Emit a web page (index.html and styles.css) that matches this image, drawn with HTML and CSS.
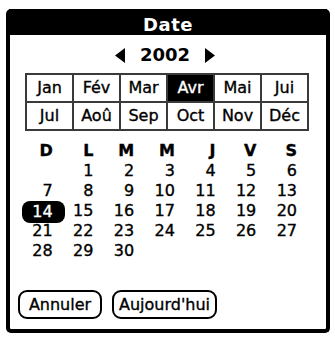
FILE: index.html
```html
<!DOCTYPE html>
<html lang="fr">
<head>
<meta charset="utf-8">
<title>Date</title>
<link rel="stylesheet" href="styles.css">
</head>
<body>
<div class="frame">
  <div class="title">Date</div>
  <div class="year-row">
    <svg class="arrow" width="10" height="15" viewBox="0 0 10 15"><polygon points="10,0 10,15 0,7.5" fill="#000"/></svg>
    <span class="year">2002</span>
    <svg class="arrow" width="10" height="15" viewBox="0 0 10 15"><polygon points="0,0 0,15 10,7.5" fill="#000"/></svg>
  </div>
  <div class="months">
    <div class="month">Jan</div>
    <div class="month">Fév</div>
    <div class="month">Mar</div>
    <div class="month selected">Avr</div>
    <div class="month">Mai</div>
    <div class="month">Jui</div>
    <div class="month">Jul</div>
    <div class="month">Aoû</div>
    <div class="month">Sep</div>
    <div class="month">Oct</div>
    <div class="month">Nov</div>
    <div class="month">Déc</div>
  </div>
  <div class="days">
    <div class="dow">D</div><div class="dow">L</div><div class="dow">M</div><div class="dow">M</div><div class="dow">J</div><div class="dow">V</div><div class="dow">S</div>
    <div class="day"></div><div class="day">1</div><div class="day">2</div><div class="day">3</div><div class="day">4</div><div class="day">5</div><div class="day">6</div>
    <div class="day">7</div><div class="day">8</div><div class="day">9</div><div class="day">10</div><div class="day">11</div><div class="day">12</div><div class="day">13</div>
    <div class="day"><span class="today">14</span></div><div class="day">15</div><div class="day">16</div><div class="day">17</div><div class="day">18</div><div class="day">19</div><div class="day">20</div>
    <div class="day">21</div><div class="day">22</div><div class="day">23</div><div class="day">24</div><div class="day">25</div><div class="day">26</div><div class="day">27</div>
    <div class="day">28</div><div class="day">29</div><div class="day">30</div>
  </div>
  <div class="buttons">
    <button class="btn btn-cancel">Annuler</button>
    <button class="btn btn-today">Aujourd'hui</button>
  </div>
</div>
</body>
</html>
```
FILE: styles.css
```css
html, body {
  margin: 0;
  padding: 0;
  background: #fff;
}
body {
  width: 335px;
  height: 337px;
  overflow: hidden;
  font-family: "DejaVu Sans", sans-serif;
  color: #000;
}
.frame {
  box-sizing: border-box;
  margin: 9px 0 0 6px;
  width: 324px;
  height: 324px;
  border: 4px solid #000;
  border-top: 0;
  border-radius: 5px;
  display: flex;
  flex-direction: column;
  background: #fff;
}
.title {
  box-sizing: border-box;
  height: 26px;
  padding-top: 5px;
  line-height: 21px;
  background: #000;
  color: #fff;
  font-weight: bold;
  font-size: 18px;
  text-align: center;
  margin: 0 -1px;
  letter-spacing: 0.5px;
}
.year-row {
  margin-top: 9px;
  height: 22px;
  display: flex;
  align-items: center;
  justify-content: center;
  padding-right: 6px;
  gap: 15px;
}
.year {
  font-size: 18px;
  font-weight: bold;
  line-height: 22px;
}
.arrow {
  display: block;
}
.months {
  margin: 7px 0 0 15px;
  width: 284px;
  box-sizing: border-box;
  display: grid;
  grid-template-columns: repeat(6, 1fr);
  border-top: 2px solid #3a3a3a;
  border-left: 2px solid #3a3a3a;
}
.month {
  height: 26px;
  line-height: 26px;
  border-right: 2px solid #3a3a3a;
  border-bottom: 2px solid #3a3a3a;
  text-align: center;
  font-size: 16px;
  -webkit-text-stroke: 0.35px #000;
}
.month.selected {
  background: #000;
  color: #fff;
  -webkit-text-stroke: 0.35px #fff;
}
.days {
  margin: 10px 0 0 2px;
  width: 285px;
  display: grid;
  grid-template-columns: repeat(7, 1fr);
  grid-auto-rows: 20px;
  font-size: 16px;
  line-height: 20px;
  text-align: right;
  -webkit-text-stroke: 0.35px #000;
}
.dow {
  font-weight: bold;
  margin-bottom: 2px;
}
.today {
  display: inline-block;
  background: #000;
  color: #fff;
  -webkit-text-stroke: 0.35px #fff;
  border-radius: 8px;
  padding: 1px 12px 1px 10px;
  margin-right: -12px;
}
.buttons {
  margin: auto 0 10px 8px;
  display: flex;
  gap: 10px;
}
.btn {
  box-sizing: border-box;
  height: 29px;
  padding: 0;
  border: 2px solid #000;
  border-radius: 9px;
  background: #fff;
  font-family: "DejaVu Sans", sans-serif;
  font-size: 16px;
  color: #000;
  text-align: center;
  -webkit-text-stroke: 0.35px #000;
}
.btn-cancel {
  width: 84px;
}
.btn-today {
  width: 105px;
}
```
